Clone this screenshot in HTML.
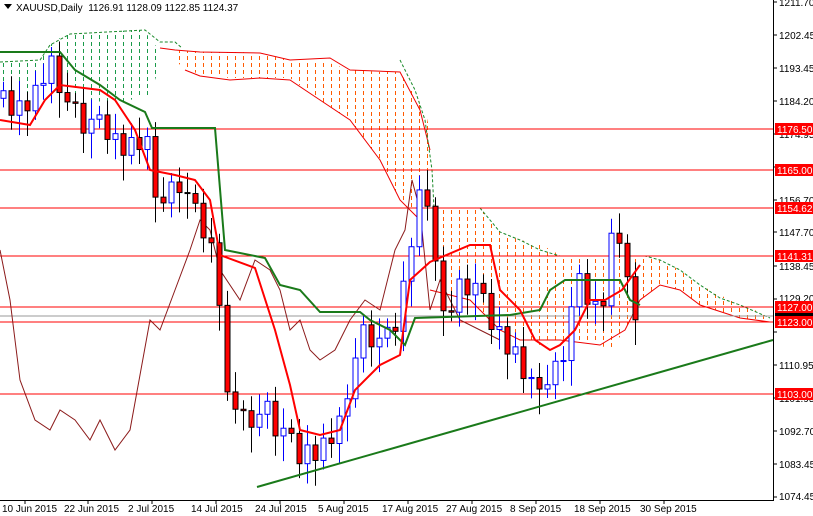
<!DOCTYPE html>
<html><head><meta charset="utf-8"><style>
body{margin:0;background:#fff;width:813px;height:516px;overflow:hidden;font-family:"Liberation Sans",sans-serif}
svg{position:absolute;left:0;top:0}
.t{font-size:10px;fill:#000}
</style></head><body>
<svg id="s" width="813" height="516" xmlns="http://www.w3.org/2000/svg">
<defs>
<pattern id="pg" width="8" height="7" patternUnits="userSpaceOnUse"><rect x="3" y="0" width="1" height="4" fill="#1a9a4a"/></pattern>
<pattern id="po" width="8" height="7" patternUnits="userSpaceOnUse"><rect x="3" y="0" width="1" height="4" fill="#ff5a00"/></pattern>
</defs>
<rect width="813" height="516" fill="#fff"/>
<g id="cloud">
<polygon fill="url(#pg)" points="0,62 15,62 30,62 40,60 50,45 60,38 70,34 80,33 95,33 110,32 130,30 145,30 150,40 160,50 160,65 150,95 130,100 110,105 95,100 80,98 60,96 40,100 20,100 0,100"/>
<polyline fill="none" stroke="#1a8a2a" stroke-width="1" stroke-dasharray="3,2" points="0,62 40,60 50,45 70,34 145,30 160,42 175,42 182,48"/>
<polygon fill="url(#po)" points="175,50 210,52 240,52 260,53 290,60 320,60 350,70 380,72 400,72 415,95 425,110 432,140 432,200 425,220 400,200 380,160 350,120 320,100 290,78 260,78 230,78 200,75 175,62"/>
<polyline fill="none" stroke="#e00" stroke-width="1" points="160,48 175,50 200,52 260,53 290,60 330,58 350,70 400,72 420,110 430,150"/>
<polyline fill="none" stroke="#e00" stroke-width="1" points="185,70 200,76 230,80 260,78 290,80 320,100 350,120 380,160 400,200 420,220"/>
<polyline fill="none" stroke="#1a8a2a" stroke-width="1" stroke-dasharray="3,2" points="400,60 415,90 425,120 432,170 434,208"/>
<polygon fill="url(#po)" points="430,208 480,208 500,232 520,240 540,244 560,255 580,258 600,258 620,256 645,256 660,260 680,270 700,285 720,295 740,305 760,312 770,318 770,322 740,318 700,305 680,290 660,285 640,300 625,330 610,350 590,340 560,340 540,345 520,340 500,330 490,320 470,300 440,290 430,260"/>
<polyline fill="none" stroke="#1a8a2a" stroke-width="1" stroke-dasharray="3,2" points="480,208 500,232 520,240 540,250 560,256 600,256 645,256 660,260 680,270 700,285 720,298 740,305 770,318"/>
<polyline fill="none" stroke="#e00" stroke-width="1" points="430,290 470,300 500,330 520,340 560,340 600,345 625,330 640,300 660,285 680,290 700,305 740,318 770,322"/>
</g>
<g fill="none" stroke="#f00" stroke-width="1">
<line x1="0" y1="129" x2="773" y2="129"/><line x1="0" y1="170" x2="773" y2="170"/>
<line x1="0" y1="208" x2="773" y2="208"/><line x1="0" y1="256" x2="773" y2="256"/>
<line x1="0" y1="307" x2="773" y2="307"/><line x1="0" y1="322" x2="773" y2="322"/>
<line x1="0" y1="394" x2="773" y2="394"/>
</g>
<line x1="0" y1="316" x2="773" y2="316" stroke="#999" stroke-width="1"/>
<polyline fill="none" stroke="#8b1a1a" stroke-width="1" points="0,250 10,300 20,380 35,420 50,430 60,410 75,420 90,440 100,420 115,450 130,430 150,320 160,330 175,290 190,250 200,220 210,230 220,270 240,300 255,260 270,270 280,290 290,330 300,320 310,350 320,360 335,350 350,320 365,300 380,310 395,250 405,230 412,180 420,210 430,310 440,280 460,320 480,330 500,340"/>
<g id="candles"></g>
<polyline fill="none" stroke="#1a7a1a" stroke-width="2" points="0,52 60,52 75,70 100,85 120,100 145,112 152,128 215,128 225,250 265,258 280,285 300,290 320,312 360,312 370,320 390,330 405,345 415,318 510,315 540,310 550,290 565,280 620,280 630,300 640,305"/>
<polyline fill="none" stroke="#f00" stroke-width="2" points="0,120 30,125 45,100 60,85 100,90 115,100 135,130 150,170 175,175 195,180 210,200 220,255 255,268 275,330 290,385 300,430 320,435 340,430 355,390 380,365 400,355 410,280 430,262 470,245 490,245 500,290 520,310 535,340 550,350 560,345 575,330 590,300 605,300 622,290 640,265"/>
<line x1="257" y1="487" x2="773" y2="340" stroke="#1a7a1a" stroke-width="2"/>
<rect x="773" y="0" width="40" height="516" fill="#fff"/>
<line x1="773.5" y1="0" x2="773.5" y2="500" stroke="#000"/>
<line x1="0" y1="500.5" x2="774" y2="500.5" stroke="#000"/>
<g class="t">
<text x="779" y="6">1211.70</text><text x="779" y="39">1202.45</text><text x="779" y="72">1193.45</text>
<text x="779" y="105">1184.20</text><text x="779" y="138">1174.95</text><text x="779" y="171">1165.70</text>
<text x="779" y="204">1156.70</text><text x="779" y="236">1147.70</text><text x="779" y="270">1138.45</text>
<text x="779" y="302">1129.20</text><text x="779" y="326">1120.20</text><text x="779" y="369">1110.95</text>
<text x="779" y="402">1101.95</text><text x="779" y="435">1092.70</text><text x="779" y="468">1083.45</text><text x="779" y="500">1074.45</text>
</g>
<g stroke="#000"><line x1="773" y1="2" x2="777" y2="2"/><line x1="773" y1="35" x2="777" y2="35"/><line x1="773" y1="68" x2="777" y2="68"/><line x1="773" y1="101" x2="777" y2="101"/><line x1="773" y1="134" x2="777" y2="134"/><line x1="773" y1="167" x2="777" y2="167"/><line x1="773" y1="200" x2="777" y2="200"/><line x1="773" y1="232" x2="777" y2="232"/><line x1="773" y1="266" x2="777" y2="266"/><line x1="773" y1="299" x2="777" y2="299"/><line x1="773" y1="332" x2="777" y2="332"/><line x1="773" y1="365" x2="777" y2="365"/><line x1="773" y1="398" x2="777" y2="398"/><line x1="773" y1="431" x2="777" y2="431"/><line x1="773" y1="464" x2="777" y2="464"/><line x1="773" y1="497" x2="777" y2="497"/></g>
<rect x="775" y="310" width="38" height="12" fill="#000"/>
<g font-size="10" fill="#fff">
<rect x="775" y="123" width="38" height="12" fill="#f00"/><text x="777" y="133">1176.50</text>
<rect x="775" y="164" width="38" height="12" fill="#f00"/><text x="777" y="174">1165.00</text>
<rect x="775" y="202" width="38" height="12" fill="#f00"/><text x="777" y="212">1154.62</text>
<rect x="775" y="250" width="38" height="12" fill="#f00"/><text x="777" y="260">1141.31</text>
<rect x="775" y="301" width="38" height="12" fill="#f00"/><text x="777" y="311">1127.00</text>
<rect x="775" y="316" width="38" height="12" fill="#f00"/><text x="777" y="326">1123.00</text>
<rect x="775" y="388" width="38" height="12" fill="#f00"/><text x="777" y="398">1103.00</text>
</g>
<g class="t">
<text x="2" y="512">10 Jun 2015</text><text x="64" y="512">22 Jun 2015</text><text x="128" y="512">2 Jul 2015</text>
<text x="191" y="512">14 Jul 2015</text><text x="255" y="512">24 Jul 2015</text><text x="318" y="512">5 Aug 2015</text>
<text x="382" y="512">17 Aug 2015</text><text x="446" y="512">27 Aug 2015</text><text x="510" y="512">8 Sep 2015</text>
<text x="574" y="512">18 Sep 2015</text><text x="640" y="512">30 Sep 2015</text>
</g>
<g stroke="#000"><line x1="25" y1="500" x2="25" y2="504"/><line x1="88" y1="500" x2="88" y2="504"/><line x1="152" y1="500" x2="152" y2="504"/><line x1="216" y1="500" x2="216" y2="504"/><line x1="280" y1="500" x2="280" y2="504"/><line x1="344" y1="500" x2="344" y2="504"/><line x1="408" y1="500" x2="408" y2="504"/><line x1="472" y1="500" x2="472" y2="504"/><line x1="536" y1="500" x2="536" y2="504"/><line x1="600" y1="500" x2="600" y2="504"/><line x1="664" y1="500" x2="664" y2="504"/></g>
<polygon points="4,4 12,4 8,9" fill="#000"/>
<text x="16" y="11" class="t" xml:space="preserve">XAUUSD,Daily  1126.91 1128.09 1122.85 1124.37</text>
</svg>
<script>
(function(){
var k=[[0,1185],[20,1183],[35,1185],[50,1195],[65,1185],[75,1180],[90,1178],[105,1178],[120,1172],[135,1170],[145,1175],[155,1160],[165,1155],[180,1163],[190,1155],[200,1152],[210,1145],[218,1135],[225,1100],[235,1100],[245,1095],[255,1097],[265,1098],[275,1095],[290,1090],[300,1087],[310,1088],[320,1086],[330,1090],[340,1095],[350,1108],[360,1118],[370,1120],[380,1117],[390,1120],[400,1128],[410,1145],[418,1155],[425,1162],[432,1142],[440,1130],[450,1125],[460,1132],[470,1135],[480,1130],[490,1125],[500,1120],[510,1115],[520,1110],[530,1105],[540,1107],[550,1105],[560,1112],[570,1125],[580,1135],[590,1130],[600,1125],[608,1138],[615,1152],[623,1140],[630,1128],[640,1124]];
function P(x){for(var i=1;i<k.length;i++){if(x<=k[i][0]){var a=k[i-1],b=k[i];return a[1]+(b[1]-a[1])*(x-a[0])/(b[0]-a[0]);}}return 1124;}
function Y(p){return 2+(1211.7-p)*3.607;}
var g=document.getElementById('candles'),s='',prev=P(0);
var n=[2,-3,1,-2,3,-1,2,-2,0,3,-3,1];
for(var x=3,i=0;x<=640;x+=8,i++){
 var c=P(x)+n[i%12]*1.2,o=prev;prev=c;
 var hi=Math.max(o,c)+2.5+(i%3)*1.5,lo=Math.min(o,c)-2.5-(i%4)*1.5;
 var up=c>o,col=up?'#00f':'#000';
 s+='<line x1="'+(x+.5)+'" y1="'+Y(hi)+'" x2="'+(x+.5)+'" y2="'+Y(lo)+'" stroke="'+col+'"/>';
 var t=Y(Math.max(o,c)),h=Math.max(1,Y(Math.min(o,c))-t);
 s+='<rect x="'+(x-2)+'" y="'+t+'" width="5" height="'+h+'" fill="'+(up?'#fff':'#f00')+'" stroke="'+col+'"/>';
}
g.innerHTML=s;
})();
</script>
</body></html>
